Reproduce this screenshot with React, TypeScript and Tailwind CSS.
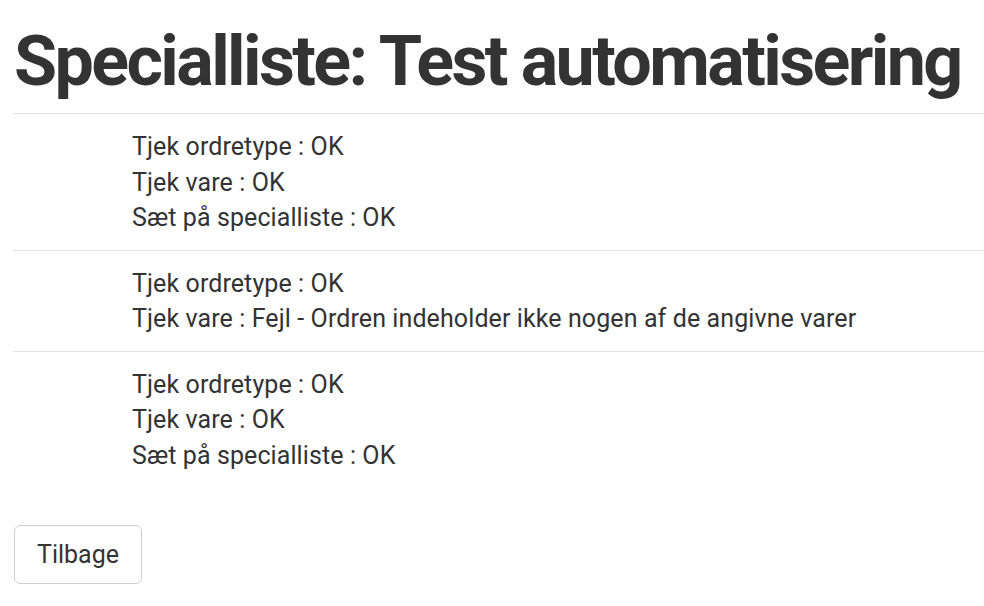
export default function App() {
  const results: string[][] = [
    ['Tjek ordretype : OK', 'Tjek vare : OK', 'Sæt på specialliste : OK'],
    ['Tjek ordretype : OK', 'Tjek vare : Fejl - Ordren indeholder ikke nogen af de angivne varer'],
    ['Tjek ordretype : OK', 'Tjek vare : OK', 'Sæt på specialliste : OK'],
  ];

  return (
    <div className="min-h-screen bg-white pl-[13px] text-[#333] [font-family:Roboto,'Liberation_Sans',sans-serif]">
      <h1 className="whitespace-nowrap pt-[21px] pb-[11px] pl-px text-[70px] font-bold leading-[81px] tracking-[-2.6px]">
        Specialliste: Test automatisering
      </h1>

      <div>
        {results.map((lines, i) => (
          <div key={i} className="border-t border-[#e3e3e3] pt-[15px] pb-[14px] pl-[119px] text-[25px] leading-[35.5px] tracking-[0.1px]">
            {lines.map((line, j) => (
              <div key={j}>{line}</div>
            ))}
          </div>
        ))}
      </div>

      <button
        type="button"
        className="mt-[38px] ml-px h-[59px] w-[128px] rounded-[6px] border border-[#cfcfcf] bg-white text-[25px] text-[#333]"
      >
        Tilbage
      </button>
    </div>
  );
}
